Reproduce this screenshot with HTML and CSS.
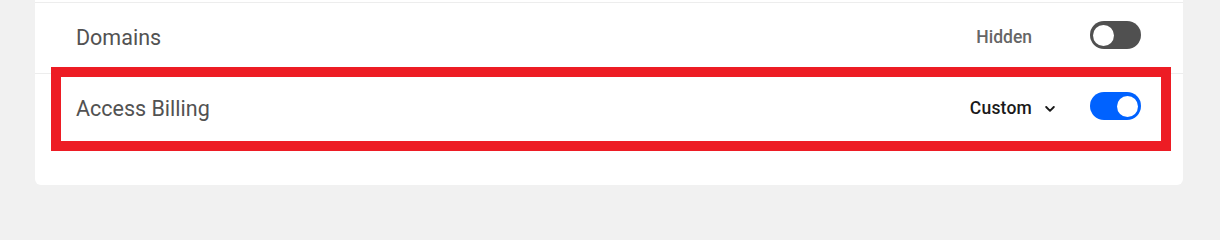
FILE: index.html
```html
<!DOCTYPE html>
<html lang="en">
<head>
<meta charset="utf-8">
<title>Permissions</title>
<link rel="stylesheet" href="styles.css">
</head>
<body>
  <div class="card">
    <div class="row">
      <div class="row-label">Domains</div>
      <div class="row-controls">
        <div class="status status-muted">
          <span class="status-text">Hidden</span>
          <span class="caret-slot"></span>
        </div>
        <span class="toggle toggle-off"><span class="knob"></span></span>
      </div>
    </div>
    <div class="row row-highlighted">
      <div class="row-label">Access Billing</div>
      <div class="row-controls">
        <div class="status status-strong">
          <span class="status-text">Custom</span>
          <span class="caret-slot">
            <svg class="caret" viewBox="0 0 10 6" width="10" height="6" aria-hidden="true">
              <polyline points="1.2,1 5,4.8 8.8,1" fill="none" stroke="#1a1a1a" stroke-width="1.9" stroke-linecap="round" stroke-linejoin="round"/>
            </svg>
          </span>
        </div>
        <span class="toggle toggle-on"><span class="knob"></span></span>
      </div>
      <div class="highlight-frame"></div>
    </div>
  </div>
</body>
</html>
```
FILE: styles.css
```css
html, body {
  margin: 0;
  padding: 0;
  background: #f1f1f1;
  font-family: Roboto, "Liberation Sans", Arial, sans-serif;
}

.card {
  width: 1148px;
  margin-left: 35px;
  padding-top: 2px;
  padding-bottom: 41px;
  background: #ffffff;
  border-radius: 0 0 6px 6px;
}

.row {
  position: relative;
  display: flex;
  align-items: center;
  justify-content: space-between;
  height: 70px;
  padding: 0 42px 0 41px;
  border-top: 1px solid #ededed;
}

.row-label {
  font-size: 21.5px;
  color: #525252;
  margin-bottom: 1px;
}

.row-controls {
  display: flex;
  align-items: center;
}

.status {
  display: flex;
  align-items: center;
  margin-bottom: 2px;
}

.status-text {
  font-size: 17.5px;
  font-weight: 500;
}

.status-muted .status-text {
  color: #666666;
}

.status-strong .status-text {
  color: #1a1a1a;
  letter-spacing: 0.2px;
}

.caret-slot {
  display: flex;
  align-items: center;
  justify-content: center;
  width: 14px;
  height: 14px;
  margin-left: 11px;
  margin-right: 33px;
}

.caret {
  display: block;
  margin-top: 2px;
}

.toggle {
  position: relative;
  display: flex;
  align-items: center;
  width: 51px;
  height: 28px;
  border-radius: 14px;
  box-sizing: border-box;
  padding: 0 3px;
  margin-bottom: 6px;
}

.toggle-off {
  background: #505050;
  justify-content: flex-start;
}

.toggle-on {
  background: #0062ff;
  justify-content: flex-end;
}

.knob {
  width: 21px;
  height: 21px;
  border-radius: 50%;
  background: #ffffff;
}

.highlight-frame {
  position: absolute;
  top: -7px;
  left: 16px;
  right: 12px;
  bottom: -7px;
  border: 10px solid #ed1c24;
  pointer-events: none;
}
```
